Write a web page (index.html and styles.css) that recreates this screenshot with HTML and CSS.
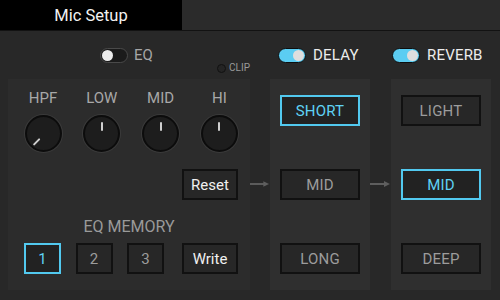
FILE: index.html
```html
<!DOCTYPE html>
<html>
<head>
<meta charset="utf-8">
<link rel="stylesheet" href="styles.css">
</head>
<body>
<div class="topbar">
  <div class="tab">Mic Setup</div>
</div>
<div class="main">
  <div class="heads">
    <div class="eq-head">
      <div class="switch-group">
        <span class="toggle off"><span class="dot"></span></span>
        <span class="head-label dim">EQ</span>
      </div>
      <div class="clip"><span class="clip-led"></span>CLIP</div>
    </div>
    <div class="spacer"></div>
    <div class="fx-head delay-head">
      <span class="toggle on"><span class="dot"></span></span>
      <span class="head-label">DELAY</span>
    </div>
    <div class="spacer"></div>
    <div class="fx-head reverb-head">
      <span class="toggle on"><span class="dot"></span></span>
      <span class="head-label">REVERB</span>
    </div>
  </div>
  <div class="content">
    <div class="eq-panel">
      <div class="knobs">
        <div class="knob-cell"><div class="knob-label">HPF</div><div class="knob"><span class="needle hpf"></span></div></div>
        <div class="knob-cell"><div class="knob-label">LOW</div><div class="knob"><span class="needle"></span></div></div>
        <div class="knob-cell"><div class="knob-label">MID</div><div class="knob"><span class="needle"></span></div></div>
        <div class="knob-cell"><div class="knob-label">HI</div><div class="knob"><span class="needle"></span></div></div>
      </div>
      <div class="reset-row"><button class="btn light wide">Reset</button></div>
      <div class="mem-label">EQ MEMORY</div>
      <div class="mem-row">
        <button class="btn mem selected">1</button>
        <button class="btn mem">2</button>
        <button class="btn mem">3</button>
        <button class="btn light wide write">Write</button>
      </div>
    </div>
    <div class="arrow">
      <svg width="21" height="8" viewBox="0 0 21 8"><path d="M0 4 H15" stroke="#5e5e5e" stroke-width="2"/><path d="M14 1 L20 4 L14 7 Z" fill="#5e5e5e"/></svg>
    </div>
    <div class="fx-col">
      <button class="btn fx selected">SHORT</button>
      <button class="btn fx">MID</button>
      <button class="btn fx">LONG</button>
    </div>
    <div class="arrow">
      <svg width="21" height="8" viewBox="0 0 21 8"><path d="M0 4 H15" stroke="#5e5e5e" stroke-width="2"/><path d="M14 1 L20 4 L14 7 Z" fill="#5e5e5e"/></svg>
    </div>
    <div class="fx-col">
      <button class="btn fx">LIGHT</button>
      <button class="btn fx selected">MID</button>
      <button class="btn fx">DEEP</button>
    </div>
  </div>
</div>
</body>
</html>
```
FILE: styles.css
```css
* { box-sizing: border-box; }
html, body {
  margin: 0;
  padding: 0;
  width: 500px;
  height: 300px;
  overflow: hidden;
  background: #282828;
  font-family: Roboto, "Liberation Sans", sans-serif;
}
.topbar {
  height: 31px;
  background: #2b2b2b;
  border-bottom: 1px solid #121212;
  display: flex;
}
.tab {
  width: 182px;
  height: 30px;
  background: #000;
  color: #f2f2f2;
  font-size: 16.5px;
  display: flex;
  align-items: center;
  justify-content: center;
  padding-top: 1px;
}
.main {
  padding: 0 9px 10px 8px;
}
.heads {
  display: grid;
  grid-template-columns: 242px 20px 100px 21px 100px;
  height: 48px;
}
.eq-head {
  display: grid;
  grid-template-columns: 1fr auto 1fr;
  align-items: center;
}
.switch-group {
  grid-column: 2;
  display: flex;
  align-items: center;
  gap: 6px;
  margin-left: -5px;
}
.clip {
  grid-column: 3;
  justify-self: end;
  align-self: end;
  margin-bottom: 6px;
  display: flex;
  align-items: center;
  gap: 3px;
  font-size: 10px;
  color: #9a9a9a;
  line-height: 10px;
}
.clip-led {
  width: 9px;
  height: 9px;
  border-radius: 50%;
  border: 1px solid #111;
  background: #242424;
}
.fx-head {
  display: flex;
  align-items: center;
  gap: 7px;
}
.delay-head { padding-left: 8px; }
.reverb-head { padding-left: 1px; }
.head-label {
  font-size: 15px;
  color: #ececec;
  letter-spacing: 0.2px;
}
.head-label.dim { color: #a6a6a6; }
.toggle {
  width: 28px;
  height: 15px;
  border-radius: 8px;
  border: 1.5px solid #0e0e0e;
  display: flex;
  align-items: center;
  padding: 0 1px;
}
.toggle .dot {
  width: 11px;
  height: 11px;
  border-radius: 50%;
  background: #e2e2e2;
}
.toggle.off {
  background: #1b1b1b;
  border-color: #4a4a4a;
  border-width: 1px;
}
.toggle.off .dot { background: #ececec; }
.toggle.on {
  background: #5bcdf2;
  justify-content: flex-end;
}
.toggle.on .dot { background: #dedede; }
.content {
  display: grid;
  grid-template-columns: 242px 20px 100px 21px 100px;
  height: 211px;
}
.eq-panel {
  background: #2c2c2c;
  padding: 10px 12px 16px 16px;
  display: flex;
  flex-direction: column;
}
.knobs {
  display: grid;
  grid-template-columns: repeat(4, 58.8px);
  margin-left: -10.4px;
}
.knob-cell {
  display: flex;
  flex-direction: column;
  align-items: center;
}
.knob-label {
  font-size: 15px;
  line-height: 18px;
  color: #a8a8a8;
  height: 18px;
}
.knob {
  margin-top: 8px;
  width: 37px;
  height: 37px;
  border-radius: 50%;
  background: #1d1d1d;
  border: 2px solid #0c0c0c;
  box-shadow: 0 0 0 1px #3a3a3a;
  display: flex;
  justify-content: center;
}
.needle {
  width: 2px;
  height: 9px;
  margin-top: 5px;
  background: #cfcfcf;
  border-radius: 1px;
}
.needle.hpf {
  transform-origin: 1px 13.5px;
  transform: rotate(-135deg);
}
.reset-row {
  display: flex;
  justify-content: flex-end;
  margin-top: 17px;
}
.btn {
  font-family: Roboto, "Liberation Sans", sans-serif;
  height: 31px;
  border: 2px solid #111;
  background: #272727;
  color: #9c9c9c;
  font-size: 15px;
  padding: 0;
  display: flex;
  align-items: center;
  justify-content: center;
}
.btn.light { color: #f0f0f0; }
.btn.wide { width: 56px; }
.btn.selected {
  border-color: #52c9ef;
  color: #5fd2f5;
  background: #222;
}
.mem-label {
  margin-top: 18px;
  margin-right: 4px;
  text-align: center;
  font-size: 16px;
  line-height: 18px;
  color: #9a9a9a;
}
.mem-row {
  display: flex;
  gap: 14.5px;
  margin-top: 7px;
}
.btn.mem { width: 37px; }
.btn.write { margin-left: auto; }
.arrow {
  display: flex;
  align-items: center;
  justify-content: flex-start;
  padding-bottom: 1px;
}
.fx-col {
  background: #2f2f2f;
  padding: 16px 10px;
  display: flex;
  flex-direction: column;
  justify-content: space-between;
}
.btn.fx { width: 80px; height: 31px; letter-spacing: 0.2px; }
```
